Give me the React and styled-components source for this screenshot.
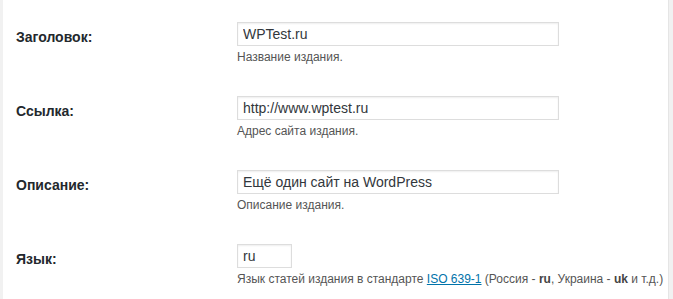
import React from 'react';
import styled, { createGlobalStyle } from 'styled-components';

const GlobalStyle = createGlobalStyle`
  html, body {
    margin: 0;
    padding: 0;
    background: #f1f1f1;
  }
  body {
    font-family: Arial, "Liberation Sans", sans-serif;
    color: #444;
  }
`;

const Page = styled.div`
  display: flex;
  height: 299px;
  padding: 0 4px 0 3px;
  box-sizing: border-box;
  overflow: hidden;
`;

const Panel = styled.div`
  flex: 1;
  background: #fff;
  border-right: 1px solid #e5e5e5;
  padding: 7px 0 0 13px;
`;

const Table = styled.div`
  display: grid;
  grid-template-columns: 221px 1fr;
`;

const Label = styled.label`
  padding-top: 20px;
  font-size: 14px;
  line-height: 20px;
  font-weight: bold;
  color: #23282d;
`;

const Field = styled.div`
  padding: 15px 0 15px 0;
  display: flex;
  flex-direction: column;
  align-items: flex-start;
`;

const Input = styled.input`
  box-sizing: border-box;
  width: ${p => p.$width}px;
  height: 24px;
  margin: 0;
  padding: 0 5px;
  border: 1px solid #ddd;
  box-shadow: inset 0 1px 2px rgba(0, 0, 0, 0.07);
  background: #fff;
  color: #32373c;
  font-family: Arial, "Liberation Sans", sans-serif;
  font-size: 14px;
  outline: none;
`;

const Help = styled.p`
  margin: 3px 0 0;
  font-size: 12px;
  line-height: 17px;
  color: #555;

  a {
    color: #0073aa;
    text-decoration: underline;
  }

  b {
    color: #444;
  }
`;

const rows = [
  { label: 'Заголовок:', value: 'WPTest.ru', width: 322, help: 'Название издания.' },
  { label: 'Ссылка:', value: 'http://www.wptest.ru', width: 322, help: 'Адрес сайта издания.' },
  { label: 'Описание:', value: 'Ещё один сайт на WordPress', width: 322, help: 'Описание издания.' },
];

export default function App() {
  return (
    <>
      <GlobalStyle />
      <Page>
        <Panel>
          <Table>
            {rows.map(r => (
              <React.Fragment key={r.label}>
                <Label>{r.label}</Label>
                <Field>
                  <Input $width={r.width} defaultValue={r.value} />
                  <Help>{r.help}</Help>
                </Field>
              </React.Fragment>
            ))}
            <Label>Язык:</Label>
            <Field>
              <Input $width={55} defaultValue="ru" />
              <Help>
                Язык статей издания в стандарте <a href="#iso">ISO 639-1</a> (Россия - <b>ru</b>, Украина - <b>uk</b> и т.д.)
              </Help>
            </Field>
          </Table>
        </Panel>
      </Page>
    </>
  );
}
